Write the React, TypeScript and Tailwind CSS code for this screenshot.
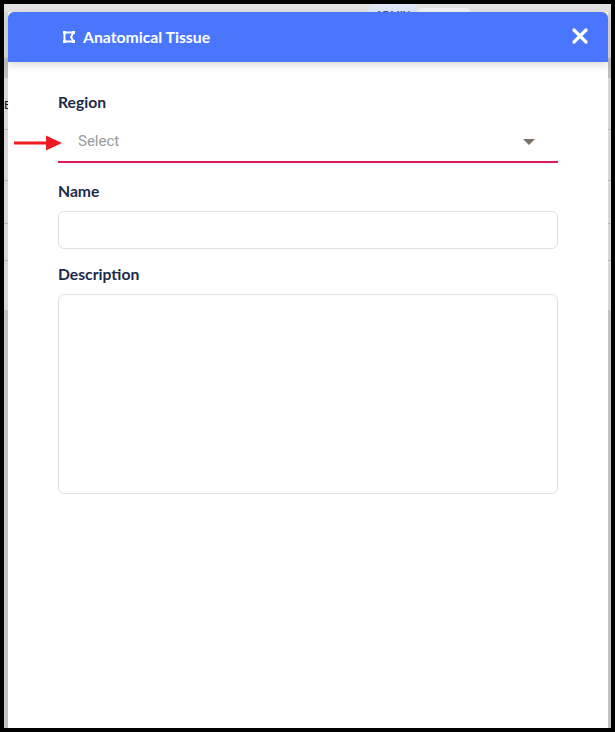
import { X } from 'lucide-react';

const FIELD_LABEL = "text-[15.7px] leading-[18px] font-bold text-[#1c2b4a] font-['Lato',sans-serif]";

// rows of the page behind the dialog, only their edges show at the sides
const ROW_LINES = [129, 180, 223, 260];

function TissueIcon() {
  return (
    <svg width="14" height="14" viewBox="0 0 14 14" fill="none" aria-hidden="true">
      <path d="M2.5 2.5 H11.5 L9 7 L11.5 11.5 H2.5 Z" stroke="white" strokeWidth="2" />
      <rect x="1" y="1" width="3" height="3" fill="white" />
      <rect x="10" y="1" width="3" height="3" fill="white" />
      <rect x="1" y="10" width="3" height="3" fill="white" />
      <rect x="10" y="10" width="3" height="3" fill="white" />
    </svg>
  );
}

function RedArrow() {
  return (
    <svg width="48" height="16" viewBox="0 0 48 16" aria-hidden="true">
      <rect x="0" y="6.5" width="33" height="3" fill="#ed1c24" />
      <path d="M32 0.5 L48 8 L32 15.5 Z" fill="#ed1c24" />
    </svg>
  );
}

export default function App() {
  return (
    <div className="relative h-[732px] w-[615px] overflow-hidden border-4 border-black bg-[#d8d8d8] font-['Lato',sans-serif]">
      <div className="absolute inset-x-0 top-0 h-[8px] bg-[#e2e2e2]" />
      <div className="absolute inset-x-0 top-[54px] h-[20px] bg-[#bdbdbd]" />
      <div className="absolute inset-x-0 top-[306px] bottom-0 bg-[#c2c2c2]" />
      <div className="absolute left-[364px] top-0 h-[8px] w-[50px] overflow-hidden rounded-t-[6px] bg-[#dfe6f7] text-center text-[10px] leading-[21px] font-bold text-[#4a5a80]">
        ADMIN
      </div>
      <div className="absolute left-[414px] top-[4px] h-[4px] w-[52px] rounded-t bg-[#f2f2f2]" />
      {ROW_LINES.map((y) => (
        <div key={y} className="absolute inset-x-0 h-px bg-[#b4b4b4]" style={{ top: y - 4 }} />
      ))}
      <span className="absolute left-0 top-[94px] text-[12px] leading-[14px] text-[#2a1020]">E</span>

      <div className="relative ml-[4px] mr-[3px] mt-[8px] flex h-[716px] flex-col bg-white">
        <div className="flex h-[50px] shrink-0 items-center justify-between rounded-t-[6px] bg-[#4a76fd] pl-[54px] pr-[16px] shadow-[0_3px_8px_rgba(0,0,0,0.15)]">
          <div className="flex items-center gap-[7px]">
            <TissueIcon />
            <span className="text-[15.75px] font-bold text-white">Anatomical Tissue</span>
          </div>
          <X className="mb-[3px] text-white" size={24} strokeWidth={3.2} />
        </div>

        <div className="ml-[50px] flex w-[500px] flex-col pt-[31px]">
          <label className={FIELD_LABEL}>Region</label>
          <div className="relative mt-[6px] flex h-[46px] items-center justify-between border-b-2 border-[#e0185c] pl-[20px] pr-[23px] pt-[5px]">
            <span className="font-['Roboto',sans-serif] text-[15px] text-[#9a9a9a]">Select</span>
            <span className="h-0 w-0 border-x-[6px] border-t-[6px] border-x-transparent border-t-[#7a7264]" />
            <div className="absolute left-[-44px] top-[18px] flex">
              <RedArrow />
            </div>
          </div>

          <label className={`${FIELD_LABEL} mt-[19px]`}>Name</label>
          <div className="mt-[11px] h-[38px] rounded-[6px] border border-[#dfdfe6] bg-white" />

          <label className={`${FIELD_LABEL} mt-[16px]`}>Description</label>
          <div className="mt-[11px] h-[200px] rounded-[6px] border border-[#dfdfe6] bg-white" />
        </div>
      </div>
    </div>
  );
}
